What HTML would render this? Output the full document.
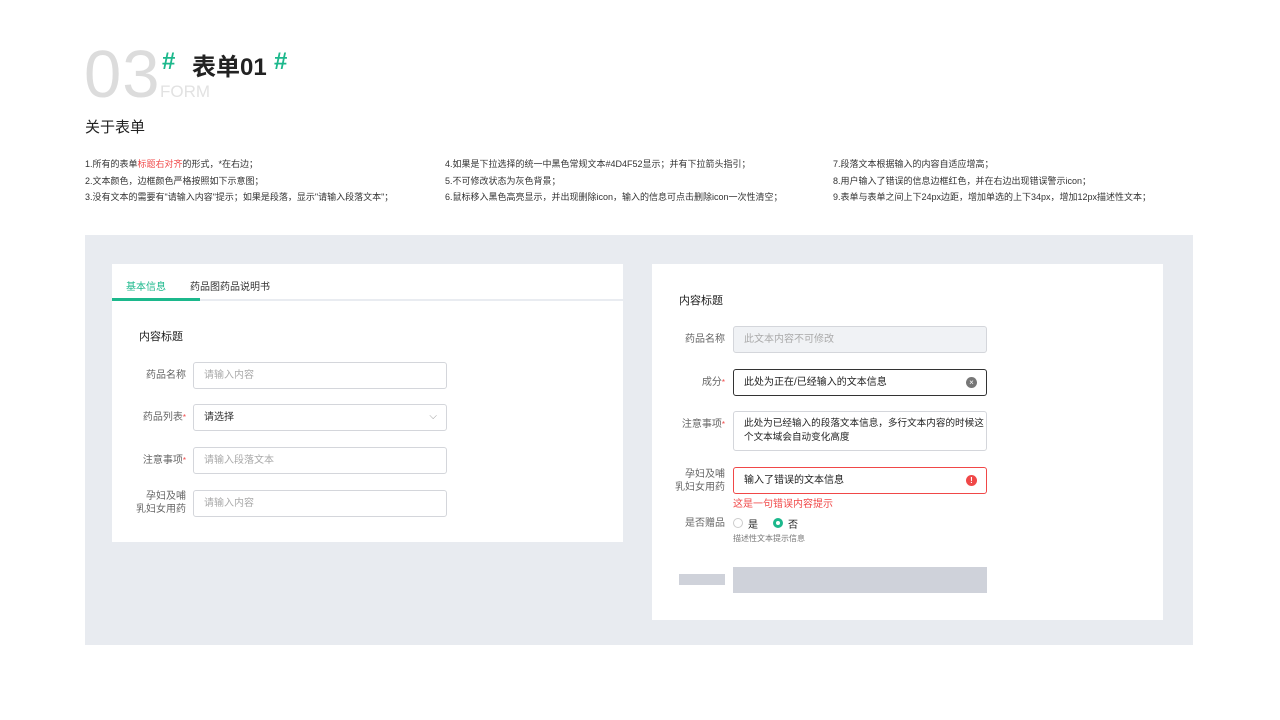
<!DOCTYPE html><html><head><meta charset="utf-8"><style>
*{margin:0;padding:0;box-sizing:border-box}
body{width:1280px;height:720px;background:#fff;font-family:"Liberation Sans","Noto Sans CJK SC",sans-serif;position:relative;overflow:hidden;color:#333}
.a{position:absolute;white-space:nowrap}
.n{font-size:9px;color:#333;line-height:16.5px}
.lbl{font-size:10px;color:#666;text-align:right;width:60px;line-height:13px}
.in{position:absolute;border:1px solid #d4d6db;border-radius:3px;height:27px;font-size:10px;color:#aaa;padding-left:10px;line-height:25px;background:#fff}
.st{color:#f04848;font-size:8px;vertical-align:top}
</style></head><body>
<div class="a" style="left:84px;top:36px;font-size:67px;color:#dcdcdc;font-weight:300;letter-spacing:1px">03</div>
<div class="a" style="left:162px;top:48px;font-size:24px;color:#1cb88c;font-weight:bold">#</div>
<div class="a" style="left:192px;top:47px;font-size:24px;color:#222;font-weight:bold">表单01</div>
<div class="a" style="left:274px;top:48px;font-size:24px;color:#1cb88c;font-weight:bold">#</div>
<div class="a" style="left:160px;top:82px;font-size:17px;color:#e2e2e2">FORM</div>
<div class="a" style="left:85px;top:116px;font-size:15px;color:#222">关于表单</div>
<div class="a n" style="left:85px;top:156px">1.所有的表单<span style="color:#f04848">标题右对齐</span>的形式，*在右边；<br>2.文本颜色，边框颜色严格按照如下示意图；<br>3.没有文本的需要有"请输入内容"提示；如果是段落，显示"请输入段落文本"；</div>
<div class="a n" style="left:445px;top:156px">4.如果是下拉选择的统一中黑色常规文本#4D4F52显示；并有下拉箭头指引；<br>5.不可修改状态为灰色背景；<br>6.鼠标移入黑色高亮显示，并出现删除icon，输入的信息可点击删除icon一次性清空；</div>
<div class="a n" style="left:833px;top:156px">7.段落文本根据输入的内容自适应增高；<br>8.用户输入了错误的信息边框红色，并在右边出现错误警示icon；<br>9.表单与表单之间上下24px边距，增加单选的上下34px，增加12px描述性文本；</div>
<div class="a" style="left:85px;top:235px;width:1108px;height:410px;background:#e8ebf0"></div>
<div class="a" style="left:112px;top:264px;width:511px;height:278px;background:#fff">
 <div class="a" style="left:0;top:35px;width:511px;height:2px;background:#e9ecf1"></div>
 <div class="a" style="left:0;top:34px;width:88px;height:3px;background:#1cb88c"></div>
 <div class="a" style="left:14px;top:14px;font-size:10px;color:#1cb88c">基本信息</div>
 <div class="a" style="left:78px;top:14px;font-size:10px;color:#333">药品图药品说明书</div>
 <div class="a" style="left:27px;top:64px;font-size:11px;color:#222">内容标题</div>
 <div class="a lbl" style="left:14px;top:105px">药品名称</div>
 <div class="in" style="left:81px;top:98px;width:254px">请输入内容</div>
 <div class="a lbl" style="left:14px;top:147px">药品列表<span class="st">*</span></div>
 <div class="in" style="left:81px;top:140px;width:254px;color:#333">请选择<span style="position:absolute;right:9px;top:-1px;color:#999">⌵</span></div>
 <div class="a lbl" style="left:14px;top:190px">注意事项<span class="st">*</span></div>
 <div class="in" style="left:81px;top:183px;width:254px">请输入段落文本</div>
 <div class="a lbl" style="left:14px;top:226px">孕妇及哺<br>乳妇女用药</div>
 <div class="in" style="left:81px;top:226px;width:254px">请输入内容</div>
</div>
<div class="a" style="left:652px;top:264px;width:511px;height:356px;background:#fff">
 <div class="a" style="left:27px;top:28px;font-size:11px;color:#222">内容标题</div>
 <div class="a lbl" style="left:13px;top:69px">药品名称</div>
 <div class="in" style="left:81px;top:62px;width:254px;background:#f0f2f5">此文本内容不可修改</div>
 <div class="a lbl" style="left:13px;top:112px">成分<span class="st">*</span></div>
 <div class="in" style="left:81px;top:105px;width:254px;border-color:#333;color:#222">此处为正在/已经输入的文本信息<span style="position:absolute;right:9px;top:7px;width:11px;height:11px;border-radius:50%;background:#777;color:#fff;font-size:8px;line-height:11px;text-align:center">×</span></div>
 <div class="a lbl" style="left:13px;top:154px">注意事项<span class="st">*</span></div>
 <div class="in" style="left:81px;top:147px;width:254px;height:40px;color:#222;line-height:14px;padding-top:5px;font-size:9.6px;overflow:hidden">此处为已经输入的段落文本信息，多行文本内容的时候这<br>个文本域会自动变化高度</div>
 <div class="a lbl" style="left:13px;top:204px">孕妇及哺<br>乳妇女用药</div>
 <div class="in" style="left:81px;top:203px;width:254px;border-color:#f04848;color:#222">输入了错误的文本信息<span style="position:absolute;right:9px;top:7px;width:11px;height:11px;border-radius:50%;background:#f04848;color:#fff;font-size:8px;line-height:11px;text-align:center;font-weight:bold">!</span></div>
 <div class="a" style="left:81px;top:231px;font-size:10px;color:#f04848">这是一句错误内容提示</div>
 <div class="a lbl" style="left:13px;top:253px">是否赠品</div>
 <div class="a" style="left:81px;top:254px;width:10px;height:10px;border:1px solid #ccc;border-radius:50%"></div>
 <div class="a" style="left:96px;top:252px;font-size:10px;color:#222">是</div>
 <div class="a" style="left:121px;top:254px;width:10px;height:10px;border:3px solid #1cb88c;border-radius:50%"></div>
 <div class="a" style="left:136px;top:252px;font-size:10px;color:#222">否</div>
 <div class="a" style="left:81px;top:269px;font-size:8px;color:#777">描述性文本提示信息</div>
 <div class="a" style="left:27px;top:310px;width:46px;height:11px;background:#cfd2da"></div>
 <div class="a" style="left:81px;top:303px;width:254px;height:26px;background:#cfd2da"></div>
</div>
</body></html>
